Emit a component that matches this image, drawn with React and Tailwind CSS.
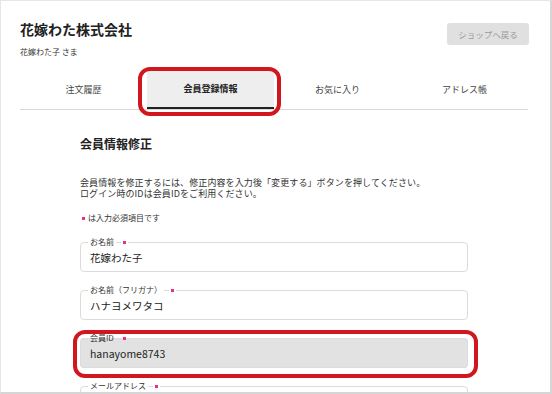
import React from "react";

const font = { fontFamily: '"Noto Sans CJK JP", "Noto Sans", sans-serif' };

function Field({ label, value, gray }) {
  return (
    <fieldset
      className={`border border-[#dcdcdc] rounded-[4px] px-[9px] pb-[4px] pt-[2px] ${gray ? "bg-[#e2e2e2]" : "bg-white"}`}
    >
      <legend className="ml-[-2px] px-[2px] h-[10px] text-[8px] leading-[10px] text-[#333] flex items-center">
        <span>{label}</span>
        <span className="inline-block w-[5px] h-px bg-[#dcdcdc] ml-[2px]" />
        <span className="inline-block w-[3px] h-[3px] bg-[#e8327c] ml-[2px]" />
      </legend>
      <div className="h-[18px] text-[10.5px] leading-[18px] text-[#222]">{value}</div>
    </fieldset>
  );
}

export default function App() {
  const tabs = ["注文履歴", "会員登録情報", "お気に入り", "アドレス帳"];
  return (
    <div
      style={font}
      className="relative w-[552px] h-[394px] overflow-hidden bg-white border-l border-t border-[#e6e6e6] border-r-2 border-b-2 border-r-[#d6d6d6] border-b-[#d6d6d6]"
    >
      <div className="pl-[19px] pr-[21px] pt-[18px]">
        <div className="flex justify-between items-start">
          <div>
            <div className="text-[14px] leading-[20px] font-bold text-[#222]">花嫁わた株式会社</div>
            <div className="mt-[7px] text-[8px] leading-[12px] text-[#333]">花嫁わた子 さま</div>
          </div>
          <div className="mt-[4px] w-[82px] h-[22px] rounded-[3px] bg-[#e0e0e0] text-[#9a9a9a] text-[8.5px] flex items-center justify-center">
            ショップへ戻る
          </div>
        </div>
        <div className="mt-[13px] mr-[1px] flex border-b-[1.5px] border-[#d8d8d8]">
          {tabs.map((t, i) => (
            <div
              key={t}
              className={`flex-1 h-[38px] flex items-center justify-center text-[9px] ${
                i === 1
                  ? "bg-[#eeeeee] font-bold text-[#222] border-b-2 border-[#222] mb-[-1.5px]"
                  : "text-[#444]"
              }`}
            >
              {t}
            </div>
          ))}
        </div>
      </div>

      <div className="pl-[79px] pr-[82px]">
        <div className="mt-[25px] text-[12px] leading-[18px] font-bold text-[#222]">会員情報修正</div>
        <div className="mt-[25px] text-[9px] leading-[10.5px] tracking-[0.1px] text-[#333]">
          <div>会員情報を修正するには、修正内容を入力後「変更する」ボタンを押してください。</div>
          <div>ログイン時のIDは会員IDをご利用ください。</div>
        </div>
        <div className="mt-[14px] flex items-center text-[8px] leading-[10px] text-[#333]">
          <span className="inline-block w-[3px] h-[3px] bg-[#e8327c] ml-[2px] mr-[3px]" />
          は入力必須項目です
        </div>
        <div className="mt-[14px] flex flex-col gap-[13px]">
          <Field label="お名前" value="花嫁わた子" />
          <Field label="お名前（フリガナ）" value="ハナヨメワタコ" />
          <Field label="会員ID" value="hanayome8743" gray />
          <Field label="メールアドレス" value="" />
        </div>
      </div>

      <div className="absolute left-[137px] top-[66px] w-[143px] h-[49px] border-[4px] border-[#d2161e] rounded-[12px] pointer-events-none" />
      <div className="absolute left-[72px] top-[329px] w-[405px] h-[48px] border-[4px] border-[#d2161e] rounded-[12px] pointer-events-none" />
    </div>
  );
}
